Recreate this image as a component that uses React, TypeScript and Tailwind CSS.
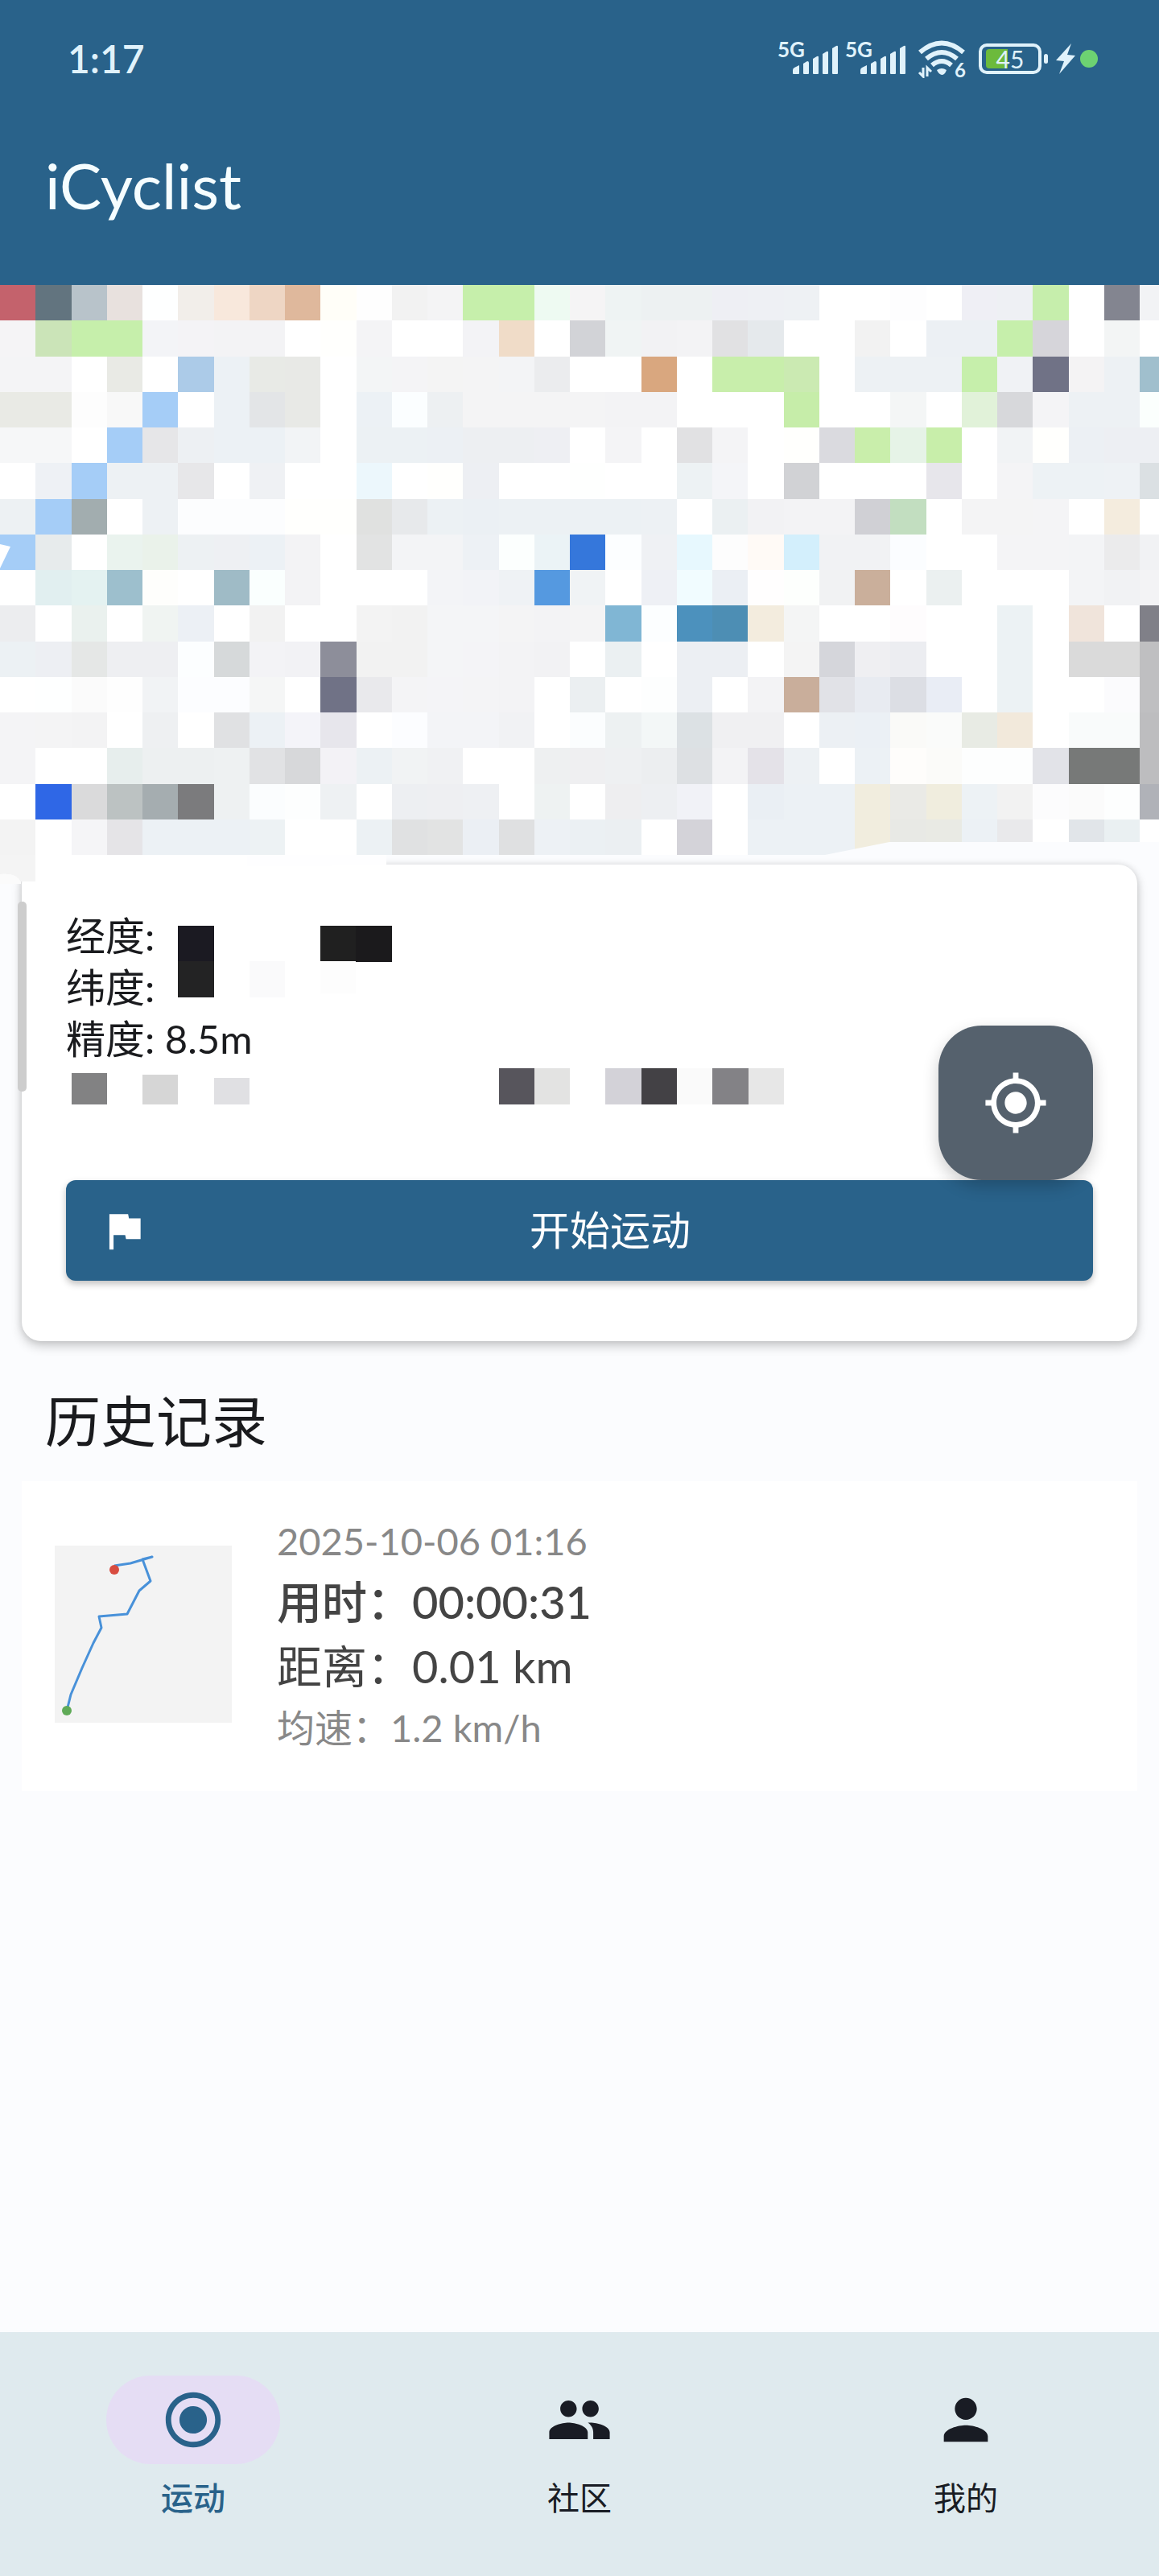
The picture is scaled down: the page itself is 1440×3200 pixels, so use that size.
import React from "react";
import { MdFlag, MdMyLocation, MdPeople, MdPerson, MdRadioButtonChecked } from "react-icons/md";

// Map tiles: one line per row of squares, west to east.
const TILE_ROWS = [
  "C4626C 62747F B8C3CA E8E1DE FEFFFF F2EEEA F8E8DC EED6C4 DFB89C FFFEF8 FEFEFE F2F2F2 F4F4F5 C6EFAB C6EFAB EEFAF2 F5F4F5 EEF3F3 EDF1F2 EDF1F2 EEEFF4 EEF0F4 EEF1F4 FFFFFF FFFFFF FDFDFE FFFFFF EFEFF5 EEF0F4 C6EEAC FFFFFF 838590 F2F3F5",
  "F5F4F6 CBE4B8 C6EFAB C6EFAB F3F4F7 F4F3F6 F3F3F5 F3F3F5 FFFFFF FFFFFD F4F4F6 FFFFFF FFFFFF F3F3F6 F0DCC8 FFFFFF D2D3D7 F0F4F4 F2F2F4 F3F3F5 E1E1E3 E5E9EC FFFFFF FFFFFF F2F2F2 FFFFFF ECF0F4 ECF0F4 C6EFAB D6D5DA FFFFFF F3F5F5 FFFFFF",
  "F4F4F6 F4F4F6 FFFFFF E9EAE5 FFFFFF ACCBE8 ECF1F5 E8EAE6 E8E9E6 FFFFFF F3F5F6 F4F4F6 F4F4F4 F4F4F5 F3F4F6 EBECEE FFFFFF FFFFFF D9A77F FFFFFF C8EEAB C8EEAB CBEAB2 FFFFFF EDF1F4 EDF1F4 EDF1F4 C6EFAB F0F2F5 707286 F4F3F4 EDF1F4 A0BFCD",
  "E9EAE5 E9EAE5 FDFDFD F8F8F8 A5CDF7 FFFFFF ECF1F5 E3E5E7 E8E9E6 FFFFFF ECF1F5 FBFEFF EDF0F2 F4F4F5 F4F4F5 F4F4F5 F4F4F5 F3F3F5 F3F3F5 FFFFFF FFFFFF FFFFFF C6EDA9 FFFFFF FFFFFF F4F6F6 FFFFFF E1F2D9 D7D8DB F4F4F6 EDF1F4 EDF1F4 FBFFFD",
  "F6F7F8 F6F7F8 FFFFFF A5CDF7 E6E6E8 EDF0F3 ECF1F5 ECF1F5 F2F4F6 FFFFFF ECF1F4 ECF1F4 ECF0F4 EDEFF2 EDEFF2 EEEFF3 FFFFFF F4F4F6 FFFFFF E1E1E3 F4F4F6 FFFFFF FFFFFD DADADF C9EEAB E6F3E7 C8EEAA FFFFFF F1F3F5 FFFFFD ECF0F4 EDEFF3 EDEFF3",
  "FFFFFF EEF1F5 A5CDF7 EDF1F4 EDF1F4 E7E7E9 FFFFFF EFF1F4 FFFFFF FFFFFF ECF7FC FFFFFF FFFFFD EDEFF3 FFFFFF FFFFFF FEFFFE FFFFFF FFFFFF EDF2F4 F4F5F8 FFFFFF D1D2D5 FFFFFF FFFFFF FFFFFF E7E6EB FFFFFF F4F4F6 EDF2F5 EDF2F5 EEF2F5 DBE0E3",
  "EDF1F3 A5CDF7 A2ADAF FFFFFF EDF1F4 FCFDFE FCFDFE FCFDFE FFFFFD FFFFFD E0E1E0 E7E9EB ECF1F4 EBF0F4 ECF1F4 ECF1F4 ECF1F4 ECF1F4 EDF1F4 FFFFFF EBF0F2 F2F2F4 F3F3F5 F3F3F5 D0D0D5 C2DEC0 FFFFFF F4F4F5 F4F4F5 F4F4F6 FFFFFF F4ECDE FFFFFF",
  "A5CDF7 E7EBEC FFFFFF EAF3EE EAF2EA EDF1F3 EEF0F3 ECF1F5 F3F3F5 FFFFFF E2E3E3 F3F4F6 F3F4F6 EDF1F5 FCFFFE EBF3F6 3577DB FCFEFF EFF1F4 E7F8FE FDFDFD FFFAF6 D3EFFC F1F2F4 F1F2F4 FBFDFF FFFFFF FFFFFF F4F4F6 F4F4F6 F3F4F6 EBEBEC F1F2F4",
  "FFFFFF E1EFF0 E4F2F1 9DBFCD FEFEFC FFFFFF 9FBBC6 FAFFFE F3F3F5 FFFFFF FFFFFF FFFFFF F3F4F7 F2F3F7 EFF2F5 5599E0 F0F3F5 FFFFFF EEF0F5 F1FCFF EBEFF4 FFFEFE FDFFFD F1F2F3 CAAF9B FFFFFF EBF0F0 FFFFFF FFFFFF FFFFFF F3F4F6 F1F2F4 F3F3F5",
  "ECEDEF FFFFFF EAF1EE FFFFFF F0F4F2 ECF0F5 FFFFFF F2F2F2 FFFFFF FFFFFF F3F3F3 F2F2F2 F4F5F7 F4F5F7 F4F4F5 F3F3F5 F4F4F5 80B6D4 FCFEFF 4C91BD 4D8EB4 F3ECDE F4F5F5 FFFFFF FFFFFF FEFCFD FFFFFF FFFFFF ECF2F4 FFFFFF F0E4DB FFFFFF 808088",
  "ECF1F4 EDEFF3 E5E7E6 EEEFF2 EEEFF2 FCFEFF D6D9DA F3F3F6 F2F2F5 8D8E9A F2F2F2 F2F2F2 F4F5F7 F4F4F7 F3F3F5 F2F2F4 FFFFFF EBF0F2 FFFFFF ECEFF3 ECEFF3 FFFFFF F4F4F4 D5D6DB EFEFF2 ECEDF1 FFFFFF FFFFFF ECF2F4 FFFFFF DADADA DADADA BFBFC1",
  "FFFFFF FEFFFF FBFBFB FEFEFE F1F3F5 FCFDFF FCFDFF F5F6F6 FFFFFF 707286 E9E9EC F4F4F6 F4F4F7 F4F4F6 F3F3F5 FFFFFF EBEFF1 FFFFFF FDFEFE ECEFF3 FFFFFF F3F3F5 C9AE9B E1E2E7 E8EBF1 DCDEE4 E9EDF5 FFFFFF ECF2F4 FFFFFF FFFFFF FBFBFD BFBFC1",
  "F4F4F6 F4F4F5 F3F3F4 FFFFFF EEF0F2 FFFFFF E0E1E3 ECF1F5 F4F4F9 E7E6EC FFFFFF FCFDFF F3F4F7 F3F4F7 F1F2F4 FFFFFF FBFDFE EDF1F2 F3F7F7 DCE1E4 F0F0F2 F0F0F2 FFFFFF ECF0F4 EBF0F5 FAFAF8 FAFBFA E8EBE4 F2E9DB FFFFFF F9FBFB F9FBFB BDBDBF",
  "F4F4F6 FFFFFF FFFFFF E7EEED EDF0F1 EDF0F1 EEF1F2 E1E2E4 D7D8DA F3F2F6 ECF1F4 F1F3F4 F0F1F3 FFFFFF FFFFFF EEF0F1 EFEFF1 EEF0F2 ECEEF0 DDE0E3 F3F3F5 E4E2E8 EDF1F4 FFFFFF ECF1F5 FEFDFB FBFBF9 FDFEFE FDFEFE E2E3E8 777978 777978 BDBDBF",
  "FFFFFF 2F67E6 DADADB BCC2C2 A5ADB0 7B7B7D EEF1F2 FBFDFE FDFEFE EEF1F3 FFFFFF EDEFF2 EEEFF2 EEF0F3 FFFFFF EEF2F2 FFFFFF EEEEF0 EDEFF2 F1F2F7 FFFFFF EAEFF4 ECF1F5 ECF1F5 F1EDDE EAEAE6 F0EDDE EDF2F5 F2F2F2 FCFCFD FBFBFB FDFEFE B0B2B8",
  "F3F3F3 FFFFFF F5F5F7 E5E4E7 ECF1F5 ECF1F5 ECF1F5 EDF2F4 FFFFFF FFFFFF ECF1F4 E0E1E2 E2E3E3 EBEFF4 DFE0E1 EDF1F5 EBF0F3 EBEFF2 FFFFFF D4D3D9 FFFFFF ECF1F5 ECF1F5 ECF1F5 F1EDDE E8E9E5 E9EAE4 ECF1F5 E9E9EB FFFFFF E1E5E9 EAF0F2 FFFFFF",
].map((row) => row.split(" "));

const TILE = 44.25;

function MapView() {
  return (
    <svg viewBox="0 0 1440 708" className="block w-full" role="img" aria-label="地图">
      <g shapeRendering="crispEdges">
        {TILE_ROWS.map((row, r) =>
          row.map((color, c) => (
            <rect key={`${r}-${c}`} x={c * TILE} y={r * TILE} width={TILE + 1} height={TILE + 1} fill={`#${color}`} />
          )),
        )}
      </g>
      <path d="M0 322 L13 325 L0 352 Z" fill="#fff" />
      <path d="M1025 708 L1105 692 H1440 V708 Z" fill="#fbfcfe" />
    </svg>
  );
}

const MASKS: [number, number, number, number, string][] = [
  [194, 76, 45, 45, "#1b1a22"],
  [194, 120, 45, 45, "#232324"],
  [371, 76, 45, 45, "#202020"],
  [415, 76, 45, 45, "#1b1a1c"],
  [283, 120, 44, 45, "#fafafb"],
  [371, 120, 44, 40, "#fdfdfd"],
  [62, 259, 44, 39, "#828283"],
  [150, 261, 44, 37, "#d6d6d6"],
  [239, 265, 44, 33, "#e0e0e3"],
  [593, 253, 44, 45, "#57555c"],
  [637, 253, 44, 45, "#e3e3e2"],
  [725, 253, 45, 45, "#d3d2d8"],
  [770, 253, 44, 45, "#434145"],
  [814, 253, 44, 45, "#fafafa"],
  [858, 253, 45, 45, "#838286"],
  [903, 253, 44, 45, "#e7e7e7"],
];

function PrivacyMask() {
  return (
    <svg
      viewBox="0 0 1386 592"
      preserveAspectRatio="xMinYMin meet"
      className="pointer-events-none absolute inset-0 h-full w-full"
      aria-hidden="true"
      shapeRendering="crispEdges"
    >
      {MASKS.map(([x, y, w, h, fill]) => (
        <rect key={`${x}-${y}`} x={x} y={y} width={w} height={h} fill={fill} />
      ))}
    </svg>
  );
}

function Signal() {
  return (
    <div className="relative h-11 w-19">
      <span className="absolute top-0 left-0 text-[26px] leading-5 font-bold">5G</span>
      <svg viewBox="0 0 76 44" className="h-11 w-19" fill="currentColor" aria-hidden="true">
        <path d="M19 40 V36 Q19 34 21 33 L27 30 V40 Q27 41 26 41 H20 Q19 41 19 40 Z" />
        <path d="M32 40 V28 L37 25 Q39 25 39 27 V40 Q39 41 38 41 H33 Q32 41 32 40 Z" />
        <path d="M44 40 V22 L49 19 Q51 18 51 20 V40 Q51 41 50 41 H45 Q44 41 44 40 Z" />
        <path d="M56 40 V16 L61 13 Q63 12 63 14 V40 Q63 41 62 41 H57 Q56 41 56 40 Z" />
        <path d="M68 40 V9 L73 6 Q75 5 75 7 V40 Q75 41 74 41 H69 Q68 41 68 40 Z" />
      </svg>
    </div>
  );
}

function Wifi() {
  return (
    <div className="relative h-12 w-15">
      <svg viewBox="0 0 60 48" className="h-12 w-15" fill="none" stroke="currentColor" aria-hidden="true">
        <path d="M3 16 Q30 -7 57 16" strokeWidth="6" />
        <path d="M11 24 Q30 8 49 24" strokeWidth="6" />
        <path d="M18 32 Q30 22 42 32" strokeWidth="6" />
        <path d="M24 38 Q30 34 36 38 Q34 44 30 44 Q26 43 24 38 Z" fill="currentColor" stroke="none" />
        <path d="M7 35 V46 L2 41 M12 46 V35 L17 40" strokeWidth="3" />
      </svg>
      <span className="absolute right-0 -bottom-1 text-[24px] leading-7 font-bold">6</span>
    </div>
  );
}

function Battery() {
  return (
    <div className="flex items-center gap-[3px]">
      <div className="relative flex h-[38px] w-[78px] items-center justify-center rounded-[10px] border-4 border-current">
        <div className="absolute top-[3px] left-[5px] h-6 w-[27px] rounded-l-[4px] bg-[#6cba3c]" />
        <span className="relative text-[30px] leading-none">45</span>
      </div>
      <div className="h-3 w-[5px] rounded-[3px] bg-current" />
    </div>
  );
}

function StatusBar() {
  return (
    <div className="flex h-[146px] items-center justify-between pr-[76px] pl-[84px] text-[#e0f2fb]">
      <span className="text-[48px] leading-none font-semibold">1:17</span>
      <div className="flex items-center">
        <Signal />
        <div className="w-2" />
        <Signal />
        <div className="w-3.5" />
        <Wifi />
        <div className="w-4" />
        <Battery />
        <svg viewBox="0 0 24 38" className="ml-2.5 h-[38px] w-6" fill="currentColor" aria-hidden="true">
          <path d="M19 0 L0 21 L10 22 L4 38 L24 15 L14 14 Z" />
        </svg>
        <span className="ml-1.5 h-[22px] w-[22px] rounded-full bg-[#6dd272]" />
      </div>
    </div>
  );
}

function TrackThumbnail() {
  return (
    <svg viewBox="0 0 220 220" className="h-55 w-55 shrink-0 bg-[#f3f3f3]" role="img" aria-label="轨迹">
      <polyline
        points="74,25 94,22 121,14 109,17 119,44 105,56 90,85 55,88 58,102 48,121 34,152 20,185 15,205"
        fill="none"
        stroke="#4891d9"
        strokeWidth="3"
        strokeLinejoin="round"
      />
      <circle cx="74" cy="30" r="6" fill="#d84c40" />
      <circle cx="15" cy="205" r="6" fill="#5faa57" />
    </svg>
  );
}

const TABS = [
  { label: "运动", Icon: MdRadioButtonChecked, active: true },
  { label: "社区", Icon: MdPeople, active: false },
  { label: "我的", Icon: MdPerson, active: false },
];

export default function App() {
  return (
    <div className="flex min-h-screen flex-col bg-[#fbfcfe] font-['Lato','Noto_Sans_CJK_SC',sans-serif] text-[#1a1b1e]">
      <header className="bg-[#29628a]">
        <StatusBar />
        <h1 className="h-52 px-14 pt-8 text-[78px] leading-[104px] font-normal text-[#f5fdff]">iCyclist</h1>
      </header>

      <main className="flex-1">
        <MapView />

        <section className="relative mx-[27px] mt-3 rounded-3xl bg-white px-[55px] pt-14 pb-[75px] shadow-[0_6px_14px_rgba(0,0,0,0.2),0_0_8px_rgba(0,0,0,0.1)]">
          <svg
            viewBox="0 0 480 48"
            className="absolute -top-3 -left-[27px] h-12 w-[480px]"
            aria-hidden="true"
          >
            <path d="M0 0 H480 V12 Q440 12 400 14 H0 Z" fill="#fefeff" />
            <rect x="27" y="0" width="280" height="33" fill="#ffffff" />
            <path d="M0 0 H44 V33 H26 Q20 22 0 24 Z" fill="#f4f4f4" />
            <path d="M0 24 Q20 22 26 33 V36 H0 Z" fill="#fbfbfb" />
          </svg>
          <PrivacyMask />
          <div className="absolute top-[46px] -left-[5px] h-[236px] w-[11px] rounded-[5px] bg-[#cdcdcd]" />

          <div className="flex h-84 items-end justify-between">
            <div className="self-start text-[49px] leading-16">
              <p>经度:</p>
              <p>纬度:</p>
              <p>精度: 8.5m</p>
            </div>
            <button
              type="button"
              aria-label="定位"
              className="relative z-10 flex h-48 w-48 items-center justify-center rounded-[54px] bg-[#55616d] text-white shadow-[0_8px_20px_rgba(0,0,0,0.2)]"
            >
              <MdMyLocation size={82} />
            </button>
          </div>
          <button
            type="button"
            className="flex h-[125px] w-full items-center gap-[27px] rounded-xl bg-[#29628a] pr-[54px] pl-[41px] text-[50px] text-white shadow-[0_4px_8px_rgba(0,0,0,0.25)]"
          >
            <MdFlag size={62} />
            <span className="flex-1 text-center">开始运动</span>
          </button>
        </section>

        <h2 className="mt-[50px] mb-6 px-14 text-[69px] leading-[100px] font-normal">历史记录</h2>

        <a href="#record" className="mx-[27px] flex items-center gap-14 bg-white px-[41px] pt-[38px] pb-[43px]">
          <TrackThumbnail />
          <div className="text-[#444444]">
            <p className="text-[47px] leading-[72px] text-[#888888]">2025-10-06 01:16</p>
            <p className="text-[56px] leading-20 font-medium">用时：00:00:31</p>
            <p className="text-[56px] leading-20">距离：0.01 km</p>
            <p className="text-[47px] leading-[72px] text-[#888888]">均速：1.2 km/h</p>
          </div>
        </a>
      </main>

      <nav className="grid h-[303px] grid-cols-3 bg-[#dfeaee] pt-[54px]">
        {TABS.map(({ label, Icon, active }) => (
          <button
            key={label}
            type="button"
            aria-current={active ? "page" : undefined}
            className={
              active
                ? "flex flex-col items-center text-[40px] font-medium text-[#29628a]"
                : "flex flex-col items-center text-[40px] font-normal text-[#191c24]"
            }
          >
            <span
              className={
                active
                  ? "flex h-[110px] w-54 items-center justify-center rounded-full bg-[#e5ddf4]"
                  : "flex h-[110px] w-54 items-center justify-center"
              }
            >
              <Icon size={82} />
            </span>
            <span className="mt-3 leading-[60px]">{label}</span>
          </button>
        ))}
      </nav>
    </div>
  );
}
